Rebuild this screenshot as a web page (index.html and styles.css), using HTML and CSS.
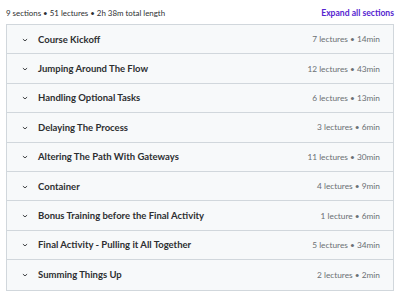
FILE: index.html
```html
<!DOCTYPE html>
<html lang="en">
<head>
  <meta charset="UTF-8" />
  <title>Course content</title>
  <link rel="stylesheet" href="styles.css">
</head>
<body>
  <div class="content">
    <div class="summary">
      <span>9 sections • 51 lectures • 2h 38m total length</span>
      <button class="expand">Expand all sections</button>
    </div>
    <div class="sections">
      <div class="section">
        <svg class="chev" viewBox="0 0 10 6"><path d="M1.5 1.5 L5 4.5 L8.5 1.5" /></svg>
        <span class="title">Course Kickoff</span>
        <span class="meta">7 lectures • 14min</span>
      </div>
      <div class="section">
        <svg class="chev" viewBox="0 0 10 6"><path d="M1.5 1.5 L5 4.5 L8.5 1.5" /></svg>
        <span class="title">Jumping Around The Flow</span>
        <span class="meta">12 lectures • 43min</span>
      </div>
      <div class="section">
        <svg class="chev" viewBox="0 0 10 6"><path d="M1.5 1.5 L5 4.5 L8.5 1.5" /></svg>
        <span class="title">Handling Optional Tasks</span>
        <span class="meta">6 lectures • 13min</span>
      </div>
      <div class="section">
        <svg class="chev" viewBox="0 0 10 6"><path d="M1.5 1.5 L5 4.5 L8.5 1.5" /></svg>
        <span class="title">Delaying The Process</span>
        <span class="meta">3 lectures • 6min</span>
      </div>
      <div class="section">
        <svg class="chev" viewBox="0 0 10 6"><path d="M1.5 1.5 L5 4.5 L8.5 1.5" /></svg>
        <span class="title">Altering The Path With Gateways</span>
        <span class="meta">11 lectures • 30min</span>
      </div>
      <div class="section">
        <svg class="chev" viewBox="0 0 10 6"><path d="M1.5 1.5 L5 4.5 L8.5 1.5" /></svg>
        <span class="title">Container</span>
        <span class="meta">4 lectures • 9min</span>
      </div>
      <div class="section">
        <svg class="chev" viewBox="0 0 10 6"><path d="M1.5 1.5 L5 4.5 L8.5 1.5" /></svg>
        <span class="title">Bonus Training before the Final Activity</span>
        <span class="meta">1 lecture • 6min</span>
      </div>
      <div class="section">
        <svg class="chev" viewBox="0 0 10 6"><path d="M1.5 1.5 L5 4.5 L8.5 1.5" /></svg>
        <span class="title">Final Activity - Pulling it All Together</span>
        <span class="meta">5 lectures • 34min</span>
      </div>
      <div class="section">
        <svg class="chev" viewBox="0 0 10 6"><path d="M1.5 1.5 L5 4.5 L8.5 1.5" /></svg>
        <span class="title">Summing Things Up</span>
        <span class="meta">2 lectures • 2min</span>
      </div>
    </div>
  </div>
</body>
</html>
```

FILE: styles.css
```css
body {
  margin: 0;
  font-family: Lato, "Liberation Sans", Arial, sans-serif;
  background: #fff;
  color: #2d2f31;
}
.content {
  padding: 0 6px;
}
.summary {
  height: 24px;
  display: flex;
  align-items: center;
  justify-content: space-between;
  font-size: 7.9px;
  padding-top: 2px;
  box-sizing: border-box;
}
.expand {
  background: none;
  border: none;
  padding: 0;
  font-family: inherit;
  font-size: 8.6px;
  font-weight: 700;
  color: #5624d0;
  cursor: pointer;
}
.sections {
  border: 1px solid #d1d7dc;
}
.section {
  height: 29.4px;
  box-sizing: border-box;
  display: flex;
  align-items: center;
  padding: 0 13px 0 15px;
  background: #f7f9fa;
  border-bottom: 1px solid #d1d7dc;
}
.section:last-child {
  border-bottom: none;
}
.chev {
  width: 6px;
  height: 4px;
  fill: none;
  stroke: #2d2f31;
  stroke-width: 1.5;
  margin: 1px 10px 0 0;
}
.title {
  flex: 1;
  font-size: 9.5px;
  font-weight: 700;
}
.meta {
  font-size: 8.3px;
  color: #6a6f73;
}
```
